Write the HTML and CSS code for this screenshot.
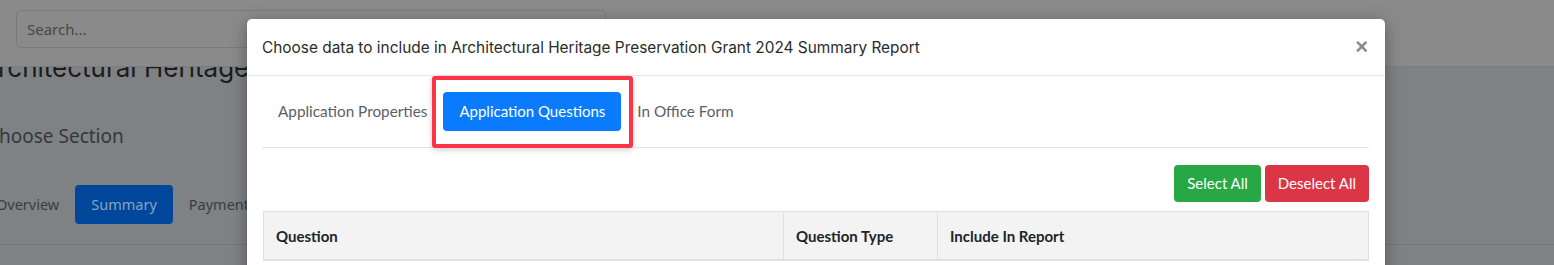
FILE: index.html
```html
<!DOCTYPE html>
<html>
<head>
<meta charset="utf-8">
<link rel="stylesheet" href="styles.css">
</head>
<body>
<div class="page">
  <header class="topbar">
    <div class="search">Search...</div>
  </header>
  <main class="content">
    <h1 class="page-title">Architectural Heritage Preservation Grant 2024</h1>
    <h2 class="section-title">Choose Section</h2>
    <nav class="pills">
      <span class="pill">Overview</span>
      <span class="pill pill-active">Summary</span>
      <span class="pill">Payments</span>
    </nav>
    <div class="rule"></div>
  </main>
</div>

<div class="modal">
  <div class="modal-header">
    <div class="modal-title">Choose data to include in Architectural Heritage Preservation Grant 2024 Summary Report</div>
    <span class="close">&times;</span>
  </div>
  <div class="modal-body">
    <nav class="tabs">
      <span class="tab">Application Properties</span>
      <span class="tab tab-active">Application Questions<span class="highlight"></span></span>
      <span class="tab">In Office Form</span>
    </nav>
    <div class="actions">
      <span class="btn btn-green">Select All</span>
      <span class="btn btn-red">Deselect All</span>
    </div>
    <div class="table">
      <div class="th th-q">Question</div>
      <div class="th th-t">Question Type</div>
      <div class="th th-i">Include In Report</div>
    </div>
  </div>
</div>
</body>
</html>
```

FILE: styles.css
```css
* { box-sizing: border-box; }
html, body { margin: 0; padding: 0; }
body {
  width: 1554px;
  height: 265px;
  overflow: hidden;
  background: #7f8285;
  font-family: "Source Sans Pro", Lato, "Liberation Sans", sans-serif;
  position: relative;
}

.page { width: 100%; }

.topbar {
  position: relative;
  z-index: 1;
  height: 67px;
  background: #8a8a8a;
  border-bottom: 1px solid #797b7d;
  padding: 10px 16px 0 16px;
}
.search {
  width: 590px;
  height: 38px;
  border: 1px solid #7a7a7a;
  border-radius: 5px;
  padding: 0 10px;
  line-height: 36px;
  font-family: "Noto Sans", sans-serif;
  font-size: 15px;
  color: #474747;
}

.content {
  margin-left: -16px;
}
.page-title {
  margin: -19px 0 0 -4px;
  font-family: Inter, "Noto Sans", sans-serif;
  font-weight: 400;
  font-size: 26px;
  line-height: 40px;
  color: #1c1c1c;
  white-space: nowrap;
}
.section-title {
  margin: 34px 0 0 3px;
  font-family: "Noto Sans", sans-serif;
  font-weight: 400;
  font-size: 19px;
  line-height: 28px;
  color: #353739;
}
.pills {
  display: flex;
  margin-top: 35px;
  margin-left: -4px;
}
.pill {
  height: 39px;
  line-height: 39px;
  padding: 0 16px;
  font-family: "Noto Sans", sans-serif;
  font-size: 14.5px;
  color: #3a3d40;
  border-radius: 4px;
}
.pill-active {
  background: #00479b;
  color: #8aa2c2;
}
.rule {
  margin-top: 20px;
  height: 1px;
  background: #737578;
}

.modal {
  position: absolute;
  z-index: 2;
  left: 247px;
  top: 19px;
  width: 1138px;
  height: 300px;
  background: #fff;
  border-radius: 5px;
  box-shadow: 0 4px 16px rgba(0,0,0,0.35);
  color: #212529;
}
.modal-header {
  display: flex;
  align-items: center;
  justify-content: space-between;
  height: 57px;
  padding: 0 16px 0 15px;
  border-bottom: 1px solid #e6e8ea;
}
.modal-title {
  font-family: Inter, "Noto Sans", sans-serif;
  font-size: 15.4px;
  color: #2b2b2b;
}
.close {
  font-family: "Liberation Sans", sans-serif;
  font-weight: 700;
  font-size: 22px;
  color: #8a8a8a;
  margin-right: 1px;
}
.modal-body {
  padding: 16px 16px 0 15px;
}
.tabs {
  display: flex;
  padding-bottom: 16px;
  border-bottom: 1px solid #e3e5e7;
}
.tab {
  position: relative;
  height: 39px;
  line-height: 39px;
  padding: 0 16px;
  font-size: 15.3px;
  color: #5b6066;
  border-radius: 4px;
}
.tab-active {
  background: #0a7bfd;
  color: #fff;
  font-size: 15px;
}
.highlight {
  position: absolute;
  left: -11px;
  top: -16px;
  right: -12px;
  bottom: -17px;
  border: 4px solid #fd3446;
  border-radius: 3px;
  box-shadow: 0 2px 6px rgba(0,0,0,0.18);
}
.actions {
  display: flex;
  justify-content: flex-end;
  gap: 4px;
  margin-top: 17px;
}
.btn {
  height: 37px;
  line-height: 37px;
  padding: 0 13px;
  font-size: 15px;
  color: #fff;
  border-radius: 4px;
}
.btn-green { background: #28a745; }
.btn-red { background: #dc3545; }

.table {
  display: grid;
  grid-template-columns: 519px 154px 1fr;
  margin-top: 9px;
  margin-left: 1px;
  border: 1px solid #dee1e4;
  background: #f3f3f3;
}
.th {
  height: 48px;
  line-height: 48px;
  padding: 0 12px;
  font-weight: 700;
  font-size: 15px;
  color: #212529;
  border-bottom: 1px solid #dee1e4;
}
.th + .th { border-left: 1px solid #dee1e4; }
```
